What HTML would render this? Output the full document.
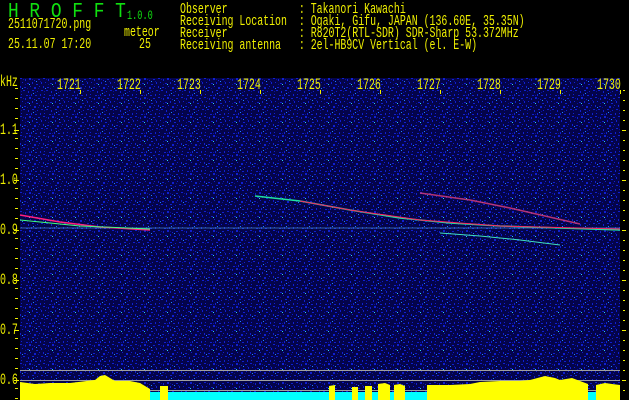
<!DOCTYPE html>
<html><head><meta charset="utf-8"><style>
html,body{margin:0;padding:0;background:#000;}
body{width:629px;height:400px;position:relative;overflow:hidden;}
.t{position:absolute;font-family:"Liberation Mono",monospace;font-size:15px;line-height:15px;color:#f0f000;white-space:pre;transform:scaleX(0.66);transform-origin:0 0;}
.a{font-size:16px;line-height:16px;transform:scaleX(0.62);}
.g{color:#10e010;}
</style></head><body>
<div class="t g" style="left:8px;top:2px;font-size:21px;line-height:21px;transform:scaleX(0.85)">H R O F F T</div>
<div class="t g" style="left:127px;top:8px;font-size:13px">1.0.0</div>
<div class="t" style="left:8px;top:17px">2511071720.png</div>
<div class="t" style="left:8px;top:37px">25.11.07 17:20</div>
<div class="t" style="left:124px;top:25px">meteor</div>
<div class="t" style="left:139px;top:37px">25</div>
<div class="t" style="left:180px;top:2px">Observer            : Takanori Kawachi</div>
<div class="t" style="left:180px;top:14px">Receiving Location  : Ogaki, Gifu, JAPAN (136.60E, 35.35N)</div>
<div class="t" style="left:180px;top:26px">Receiver            : R820T2(RTL-SDR) SDR-Sharp 53.372MHz</div>
<div class="t" style="left:180px;top:38px">Receiving antenna   : 2el-HB9CV Vertical (el. E-W)</div>

<svg width="629" height="400" style="position:absolute;left:0;top:0" xmlns="http://www.w3.org/2000/svg">
<defs>
<pattern id="p" x="20" y="78" width="23" height="19" patternUnits="userSpaceOnUse">
<rect width="23" height="19" fill="#04044a"/>
<g fill="#1020d0">
<rect x="0" y="0" width="2" height="1"/><rect x="5" y="1" width="1" height="2"/><rect x="9" y="0" width="2" height="2"/><rect x="14" y="2" width="1" height="1"/><rect x="18" y="1" width="2" height="1"/>
<rect x="2" y="4" width="1" height="1"/><rect x="7" y="5" width="2" height="1"/><rect x="12" y="4" width="1" height="2"/><rect x="16" y="6" width="2" height="1"/><rect x="21" y="4" width="1" height="2"/>
<rect x="0" y="8" width="1" height="2"/><rect x="4" y="9" width="2" height="1"/><rect x="10" y="8" width="1" height="1"/><rect x="14" y="9" width="2" height="2"/><rect x="19" y="8" width="1" height="1"/>
<rect x="3" y="12" width="2" height="1"/><rect x="8" y="13" width="1" height="2"/><rect x="12" y="12" width="2" height="1"/><rect x="17" y="13" width="1" height="1"/><rect x="21" y="12" width="2" height="1"/>
<rect x="1" y="16" width="1" height="1"/><rect x="6" y="17" width="2" height="1"/><rect x="11" y="16" width="1" height="2"/><rect x="15" y="17" width="2" height="1"/><rect x="20" y="16" width="1" height="2"/>
</g>
<g fill="#0810a0">
<rect x="3" y="1" width="1" height="1"/><rect x="12" y="1" width="1" height="1"/><rect x="20" y="3" width="1" height="1"/><rect x="5" y="6" width="1" height="1"/><rect x="18" y="10" width="1" height="1"/><rect x="7" y="10" width="1" height="1"/><rect x="1" y="13" width="1" height="1"/><rect x="15" y="14" width="1" height="1"/><rect x="9" y="17" width="1" height="1"/>
</g>
<g fill="#2080ff"><rect x="16" y="3" width="1" height="1"/><rect x="2" y="10" width="1" height="1"/><rect x="13" y="15" width="1" height="1"/></g>
<rect x="9" y="6" width="1" height="1" fill="#30d0f0"/>
</pattern>
</defs>
<rect x="20" y="78" width="600" height="322" fill="url(#p)"/>
<line x1="20" y1="228" x2="620" y2="228" stroke="#60c0ff" stroke-width="1" opacity="0.5"/>
<polyline points="20,215 60,222 100,227 150,230" fill="none" stroke="#ff2080" stroke-width="1.5"/>
<polyline points="20,220 80,226 150,229" fill="none" stroke="#40ff80" stroke-width="1"/>
<polyline points="255,196 300,201 350,210 400,218 450,223 500,226 560,228 620,230" fill="none" stroke="#20e0a0" stroke-width="1.5"/>
<polyline points="300,201 350,210 420,220 500,226 620,229" fill="none" stroke="#ff2060" stroke-width="1"/>
<polyline points="420,193 470,200 510,208 545,216 580,224" fill="none" stroke="#e04080" stroke-width="1.5" opacity="0.8"/>
<polyline points="440,233 480,236 520,240 560,245" fill="none" stroke="#40e0c0" stroke-width="1"/>
<line x1="20" y1="370.5" x2="620" y2="370.5" stroke="#a0a0a0"/>
<line x1="20" y1="380.5" x2="620" y2="380.5" stroke="#a0a0a0"/>
<line x1="20" y1="390.5" x2="620" y2="390.5" stroke="#a0a0a0"/>
<rect x="20" y="392" width="600" height="8" fill="#00ffff"/>
<polygon fill="#ffff00" points="20,400 20,382 35,384 50,383 70,383 95,380 100,376 105,375 110,378 115,381 130,381 140,383 150,389 150,400"/>
<polygon fill="#ffff00" points="160,400 160,386 168,386 168,400"/>
<polygon fill="#ffff00" points="329,400 329,386 335,385 335,400"/>
<polygon fill="#ffff00" points="352,400 352,387 358,387 358,400"/>
<polygon fill="#ffff00" points="365,400 365,386 372,386 372,400"/>
<polygon fill="#ffff00" points="378,400 378,384 385,383 390,385 390,400"/>
<polygon fill="#ffff00" points="394,400 394,385 400,384 405,386 405,400"/>
<polygon fill="#ffff00" points="427,400 427,385 450,385 470,384 480,382 500,381 520,381 530,380 545,376 555,378 560,380 572,378 580,381 588,384 588,400"/>
<polygon fill="#ffff00" points="596,400 596,385 605,383 612,384 620,385 620,400"/>
<g fill="#f0f000">
<rect x="15" y="88" width="3" height="1"/><rect x="15" y="98" width="3" height="1"/><rect x="15" y="108" width="3" height="1"/><rect x="15" y="118" width="3" height="1"/>
<rect x="15" y="138" width="3" height="1"/><rect x="15" y="148" width="3" height="1"/><rect x="15" y="158" width="3" height="1"/><rect x="15" y="168" width="3" height="1"/>
<rect x="15" y="188" width="3" height="1"/><rect x="15" y="198" width="3" height="1"/><rect x="15" y="208" width="3" height="1"/><rect x="15" y="218" width="3" height="1"/>
<rect x="15" y="238" width="3" height="1"/><rect x="15" y="248" width="3" height="1"/><rect x="15" y="258" width="3" height="1"/><rect x="15" y="268" width="3" height="1"/>
<rect x="15" y="288" width="3" height="1"/><rect x="15" y="298" width="3" height="1"/><rect x="15" y="308" width="3" height="1"/><rect x="15" y="318" width="3" height="1"/>
<rect x="15" y="338" width="3" height="1"/><rect x="15" y="348" width="3" height="1"/><rect x="15" y="358" width="3" height="1"/><rect x="15" y="368" width="3" height="1"/>
<rect x="15" y="388" width="3" height="1"/><rect x="15" y="398" width="3" height="1"/>
<rect x="14" y="130" width="5" height="1"/><rect x="14" y="180" width="5" height="1"/><rect x="14" y="230" width="5" height="1"/><rect x="14" y="280" width="5" height="1"/><rect x="14" y="330" width="5" height="1"/><rect x="14" y="380" width="5" height="1"/>
<rect x="623" y="90" width="2" height="1"/><rect x="623" y="100" width="2" height="1"/><rect x="623" y="110" width="2" height="1"/><rect x="623" y="120" width="2" height="1"/>
<rect x="623" y="140" width="2" height="1"/><rect x="623" y="150" width="2" height="1"/><rect x="623" y="160" width="2" height="1"/><rect x="623" y="170" width="2" height="1"/>
<rect x="623" y="190" width="2" height="1"/><rect x="623" y="200" width="2" height="1"/><rect x="623" y="210" width="2" height="1"/><rect x="623" y="220" width="2" height="1"/>
<rect x="623" y="240" width="2" height="1"/><rect x="623" y="250" width="2" height="1"/><rect x="623" y="260" width="2" height="1"/><rect x="623" y="270" width="2" height="1"/>
<rect x="623" y="290" width="2" height="1"/><rect x="623" y="300" width="2" height="1"/><rect x="623" y="310" width="2" height="1"/><rect x="623" y="320" width="2" height="1"/>
<rect x="623" y="340" width="2" height="1"/><rect x="623" y="350" width="2" height="1"/><rect x="623" y="360" width="2" height="1"/><rect x="623" y="370" width="2" height="1"/>
<rect x="623" y="390" width="2" height="1"/>
<rect x="622" y="130" width="4" height="1"/><rect x="622" y="180" width="4" height="1"/><rect x="622" y="230" width="4" height="1"/><rect x="622" y="280" width="4" height="1"/><rect x="622" y="330" width="4" height="1"/><rect x="622" y="380" width="4" height="1"/>
<rect x="80" y="90" width="1" height="4"/><rect x="140" y="90" width="1" height="4"/><rect x="200" y="90" width="1" height="4"/><rect x="260" y="90" width="1" height="4"/><rect x="320" y="90" width="1" height="4"/><rect x="380" y="90" width="1" height="4"/><rect x="440" y="90" width="1" height="4"/><rect x="500" y="90" width="1" height="4"/><rect x="560" y="90" width="1" height="4"/><rect x="620" y="90" width="1" height="4"/>
</g>
</svg>
<div class="t a" style="left:0px;top:74px">kHz</div>
<div class="t a" style="left:0px;top:122px">1.1</div>
<div class="t a" style="left:0px;top:172px">1.0</div>
<div class="t a" style="left:0px;top:222px">0.9</div>
<div class="t a" style="left:0px;top:272px">0.8</div>
<div class="t a" style="left:0px;top:322px">0.7</div>
<div class="t a" style="left:0px;top:372px">0.6</div>
<div class="t a" style="left:57px;top:77px">1721</div>
<div class="t a" style="left:117px;top:77px">1722</div>
<div class="t a" style="left:177px;top:77px">1723</div>
<div class="t a" style="left:237px;top:77px">1724</div>
<div class="t a" style="left:297px;top:77px">1725</div>
<div class="t a" style="left:357px;top:77px">1726</div>
<div class="t a" style="left:417px;top:77px">1727</div>
<div class="t a" style="left:477px;top:77px">1728</div>
<div class="t a" style="left:537px;top:77px">1729</div>
<div class="t a" style="left:597px;top:77px">1730</div>
</body></html>
